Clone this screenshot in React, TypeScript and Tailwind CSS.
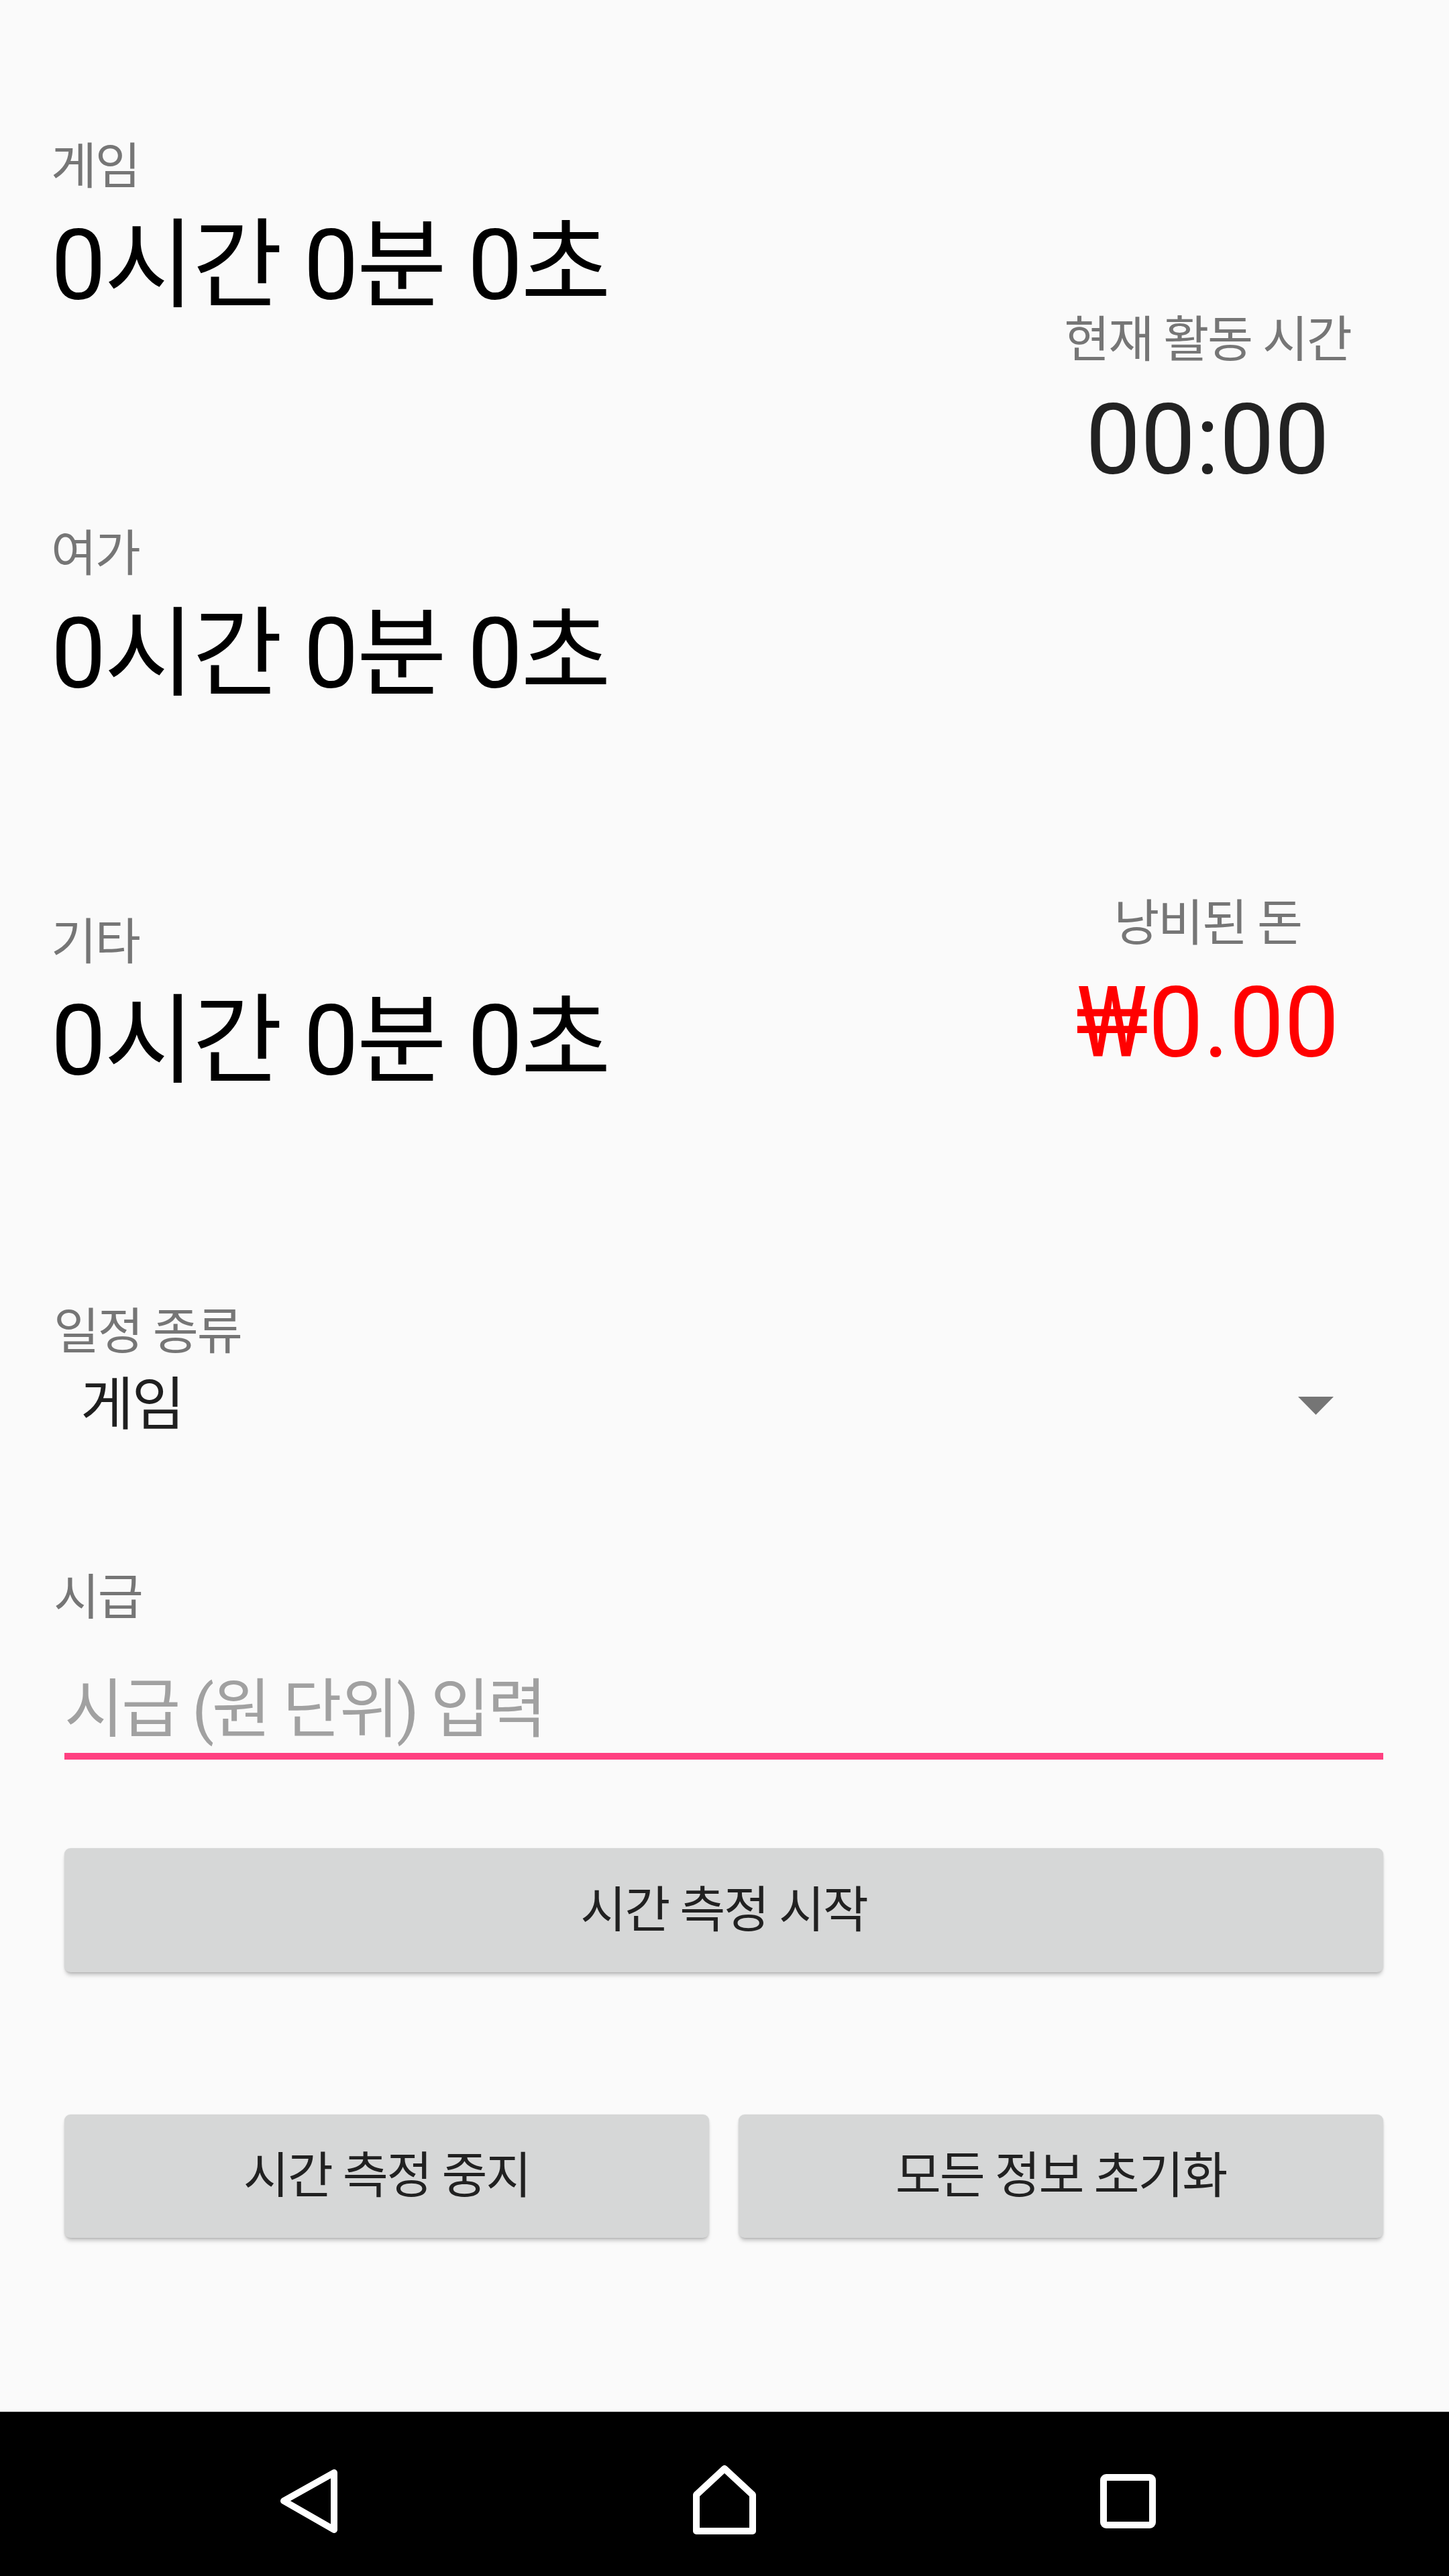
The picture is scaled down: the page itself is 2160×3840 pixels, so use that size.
import React from 'react'

const stats = [
  { id: 'game', label: '게임', mt: 'mt-[205px]', gap: 'mt-[19px]' },
  { id: 'leisure', label: '여가', mt: 'mt-[300px]', gap: 'mt-[21px]' },
  { id: 'etc', label: '기타', mt: 'mt-[300px]', gap: 'mt-[19px]' },
]

function NavBar() {
  return (
    <div className="h-[245px] bg-black flex justify-center items-start pt-[62px] border-t border-[#3a3a3a]">
      {/* Back */}
      <div className="w-[600px] flex justify-center">
        <svg width="140" height="140" viewBox="0 0 140 140" fill="none" stroke="#fff" strokeWidth="10" strokeLinejoin="round">
          <path d="M88 28 L13 70 L88 113 Z" />
        </svg>
      </div>
      {/* Home */}
      <div className="w-[600px] flex justify-center">
        <svg width="140" height="140" viewBox="0 0 140 140" fill="none" stroke="#fff" strokeWidth="10" strokeLinejoin="round">
          <path d="M28 115 L28 61 L70 22 L112 61 L112 115 Z" />
        </svg>
      </div>
      {/* Recents */}
      <div className="w-[600px] flex justify-center">
        <svg width="140" height="140" viewBox="0 0 140 140" fill="none" stroke="#fff" strokeWidth="10" strokeLinejoin="round">
          <rect x="35" y="35" width="73" height="71" rx="4" />
        </svg>
      </div>
    </div>
  )
}

export default function App() {
  return (
    <div
      className="h-[3840px] flex flex-col bg-[#fafafa] text-black"
      style={{ fontFamily: "Roboto, 'Noto Sans CJK KR', sans-serif" }}
    >
      <main className="flex-1">
        {/* Totals + live counters */}
        <div className="flex pl-[76px] pr-[110px]">
          <div className="flex-1">
            {stats.map((s) => (
              <div key={s.id}>
                <div className={`${s.mt} text-[74px] leading-[88px] tracking-[-0.03em] text-[#767676]`}>{s.label}</div>
                <div className={`${s.gap} text-[146px] leading-[170px] tracking-[-0.018em] text-black`}>0시간 0분 0초</div>
              </div>
            ))}
          </div>

          <div className="w-[500px] flex flex-col items-center">
            <div className="mt-[463px] text-[74px] leading-[88px] tracking-[-0.03em] text-[#767676] whitespace-nowrap">현재 활동 시간</div>
            <div className="mt-[21px] text-[146px] leading-[170px] text-[#222222]">00:00</div>
            <div className="mt-[591px] text-[74px] leading-[88px] tracking-[-0.03em] text-[#767676] whitespace-nowrap">낭비된 돈</div>
            <div className="mt-[20px] text-[146px] leading-[170px] text-[#ff0000]">₩0.00</div>
          </div>
        </div>

        {/* Form */}
        <div className="pl-[80px] pr-[98px]">
          <div className="mt-[304px] text-[74px] leading-[88px] tracking-[-0.03em] text-[#767676]">일정 종류</div>
          <div className="mt-[15px] h-[100px] flex items-center justify-between">
            <span className="pl-[40px] text-[86px] leading-[100px] tracking-[-0.03em] text-[#1f1f1f]">게임</span>
            <svg width="53" height="27" viewBox="0 0 53 27" className="mr-[74px]">
              <polygon points="0,0 53,0 26.5,27" fill="#757575" />
            </svg>
          </div>

          <div className="mt-[193px] text-[74px] leading-[88px] tracking-[-0.03em] text-[#767676]">시급</div>
          <div className="ml-[16px] mt-[66px]">
            <input
              type="text"
              placeholder="시급 (원 단위) 입력"
              className="w-full h-[112px] bg-transparent outline-none text-[96px] leading-[112px] tracking-[-0.035em] text-black placeholder:text-[#a1a1a1]"
            />
            <div className="mt-[9px] h-[10px] bg-[#ff4081]" />
          </div>

          <button className="ml-[16px] mt-[132px] w-[calc(100%-16px)] h-[185px] rounded-[9px] bg-[#d6d7d7] text-[74px] leading-[88px] tracking-[-0.03em] text-[#212121] shadow-[0_6px_6px_-2px_rgba(0,0,0,0.22),0_1px_3px_rgba(0,0,0,0.12)]">
            시간 측정 시작
          </button>

          <div className="ml-[16px] mt-[212px] flex gap-[44px]">
            <button className="flex-1 h-[184px] rounded-[9px] bg-[#d6d7d7] text-[74px] leading-[88px] tracking-[-0.03em] text-[#212121] shadow-[0_6px_6px_-2px_rgba(0,0,0,0.22),0_1px_3px_rgba(0,0,0,0.12)]">
              시간 측정 중지
            </button>
            <button className="flex-1 h-[184px] rounded-[9px] bg-[#d6d7d7] text-[74px] leading-[88px] tracking-[-0.03em] text-[#212121] shadow-[0_6px_6px_-2px_rgba(0,0,0,0.22),0_1px_3px_rgba(0,0,0,0.12)]">
              모든 정보 초기화
            </button>
          </div>
        </div>
      </main>

      <NavBar />
    </div>
  )
}
